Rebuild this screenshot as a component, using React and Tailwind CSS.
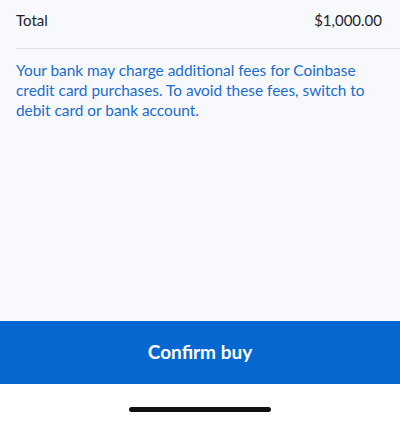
import React from 'react';

export default function App() {
  return (
    <div className="w-[400px] h-[421px] flex flex-col bg-white" style={{ fontFamily: 'Lato, "Noto Sans", sans-serif' }}>
      <div className="flex-1 bg-[#f8f9fd] flex flex-col">
        <div className="flex items-start justify-between ml-4 pr-[18px] pt-[10px] h-[49px] border-b border-[#e1e4ea]">
          <span className="text-[15px] leading-[20px] text-[#1b1f2a]">Total</span>
          <span className="text-[15px] leading-[20px] text-[#1b1f2a]">$1,000.00</span>
        </div>
        <p className="px-4 pt-[11px] text-[15.4px] leading-[20px] text-[#1a6ccf]">
          Your bank may charge additional fees for Coinbase credit card purchases. To avoid these fees, switch to debit card or bank account.
        </p>
      </div>
      <button className="h-[63px] w-full bg-[#0667d0] text-white text-[19px] font-bold flex items-center justify-center">
        Confirm buy
      </button>
      <div className="h-[37px] flex items-center justify-center">
        <div className="w-[142px] h-[5px] rounded-full bg-[#111] mt-[13px]" />
      </div>
    </div>
  );
}
